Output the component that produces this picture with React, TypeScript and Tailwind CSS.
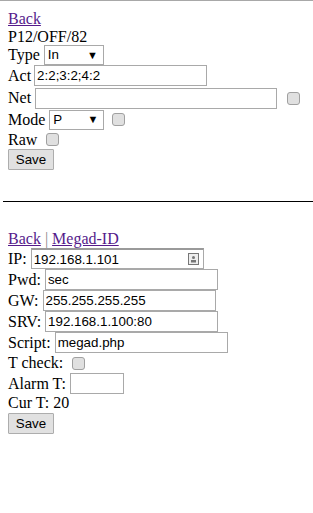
const serif = "font-['Liberation_Serif','Times_New_Roman',serif] text-[16px] leading-[18px] text-black";
const inputCls =
  "h-[21px] border border-[#a9a9a9] bg-white px-[2px] font-['Liberation_Sans',Arial,sans-serif] text-[13.33px] text-black outline-none";

function Check({ className = "" }: { className?: string }) {
  return (
    <span
      className={`inline-block h-[13px] w-[13px] rounded-[3px] border border-[#a0a0a0] bg-[#e0e0e0] ${className}`}
    />
  );
}

function Select({ value, width }: { value: string; width: string }) {
  return (
    <span
      className={`inline-flex h-[20px] items-center justify-between border border-[#a9a9a9] bg-white pl-[3px] pr-[5px] font-['Liberation_Sans',Arial,sans-serif] text-[13.33px] text-black ${width}`}
    >
      <span>{value}</span>
      <span className="text-[11px] leading-none">▼</span>
    </span>
  );
}

function Field({ label, value, width = "w-[173px]", gap = "ml-[4px]" }: { label: string; value: string; width?: string; gap?: string }) {
  return (
    <div className="flex h-[21px] items-center">
      <span>{label}</span>
      <input readOnly value={value} className={`${inputCls} ${width} ${gap}`} />
    </div>
  );
}

function SaveButton() {
  return (
    <button
      type="button"
      className="h-[21px] w-[46px] rounded-[1px] border border-[#adadad] bg-[#e1e1e1] font-['Liberation_Sans',Arial,sans-serif] text-[13.33px] text-black"
    >
      Save
    </button>
  );
}

export default function App() {
  return (
    <div className={`${serif} w-[313px] h-[513px] bg-white`}>
      <div className="border-t border-[#a8a8a8] px-[8px] pt-[9px]">
        <a className="text-[#551a8b] underline">Back</a>
        <div>P12/OFF/82</div>
        <div className="mt-[-1px] flex h-[20px] items-center">
          <span>Type</span>
          <span className="ml-[4px]">
            <Select value="In" width="w-[60px]" />
          </span>
        </div>
        <div className="flex h-[21px] items-center">
          <span>Act</span>
          <input readOnly value="2:2;3:2;4:2" className={`${inputCls} ml-[3px] w-[173px]`} />
        </div>
        <div className="mt-[1px] flex h-[22px] items-center">
          <span>Net</span>
          <input readOnly value="" className={`${inputCls} ml-[4px] w-[242px]`} />
          <Check className="ml-[10px]" />
        </div>
        <div className="flex h-[21px] items-center">
          <span>Mode</span>
          <span className="ml-[4px]">
            <Select value="P" width="w-[55px]" />
          </span>
          <Check className="ml-[8px]" />
        </div>
        <div className="flex h-[19px] items-center">
          <span>Raw</span>
          <Check className="ml-[9px]" />
        </div>
        <div className="flex h-[21px] items-center">
          <SaveButton />
        </div>
      </div>

      <div className="mt-[31px] ml-[3px] h-[1px] bg-black" />

      <div className="px-[8px] pt-[28px]">
        <div className="h-[18px]">
          <a className="text-[#551a8b] underline">Back</a>
          <span className="text-[#888]"> | </span>
          <a className="text-[#551a8b] underline">Megad-ID</a>
        </div>
        <div className="flex h-[21px] items-center">
          <span>IP:</span>
          <span className="relative ml-[4px] inline-flex">
            <input
              readOnly
              value="192.168.1.101"
              className={`${inputCls} w-[173px] border-t-2 border-t-[#9a9a9a]`}
            />
            <svg className="absolute right-[5px] top-[5px]" width="11" height="12" viewBox="0 0 11 12">
              <rect x="0.5" y="0.5" width="10" height="11" fill="#eee" stroke="#777" />
              <circle cx="5.5" cy="4.5" r="1.5" fill="#777" />
              <rect x="3" y="7" width="5" height="2.5" fill="#777" />
            </svg>
          </span>
        </div>
        <Field label="Pwd:" value="sec" />
        <Field label="GW:" value="255.255.255.255" />
        <Field label="SRV:" value="192.168.1.100:80" />
        <Field label="Script:" value="megad.php" />
        <div className="flex h-[20px] items-center">
          <span>T check:</span>
          <Check className="ml-[9px]" />
        </div>
        <div className="flex h-[21px] items-center">
          <span>Alarm T:</span>
          <input readOnly value="" className={`${inputCls} ml-[4px] w-[54px]`} />
        </div>
        <div className="h-[19px]">Cur T: 20</div>
        <div className="flex h-[21px] items-center">
          <SaveButton />
        </div>
      </div>
    </div>
  );
}
